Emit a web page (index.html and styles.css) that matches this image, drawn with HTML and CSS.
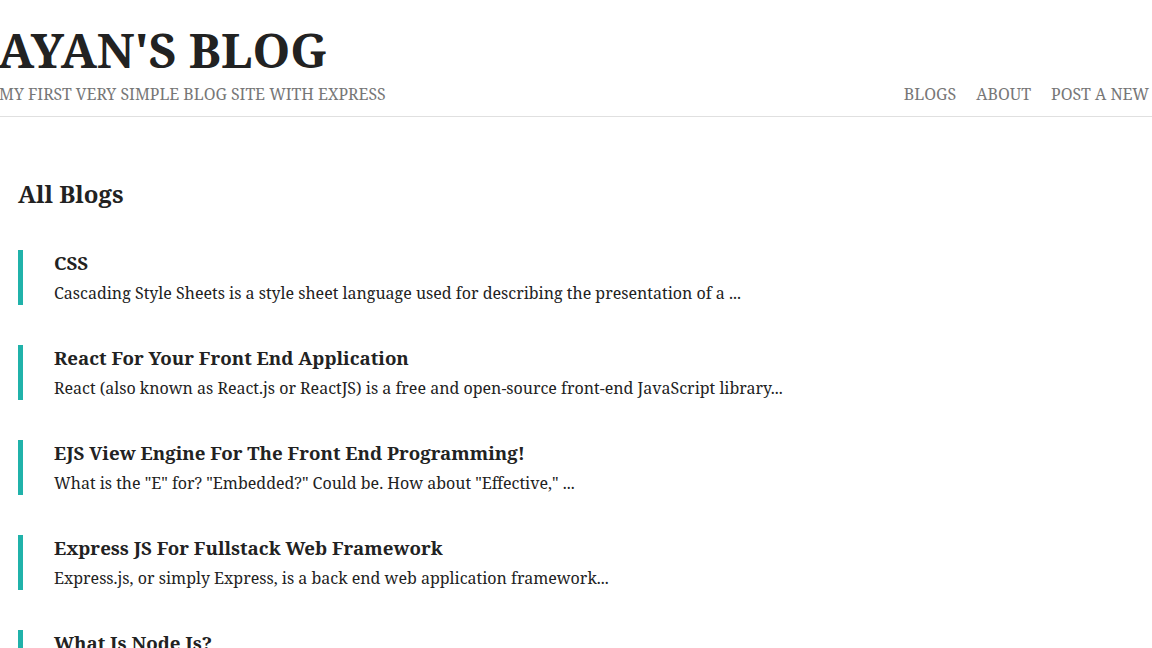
FILE: index.html
```html
<!DOCTYPE html>
<html>
<head>
<meta charset="utf-8">
<link rel="stylesheet" href="styles.css">
</head>
<body>
<header class="site-header">
  <div class="brand">
    <h1 class="site-title">AYAN'S BLOG</h1>
    <p class="tagline">MY FIRST VERY SIMPLE BLOG SITE WITH EXPRESS</p>
  </div>
  <nav class="nav">
    <a href="#">BLOGS</a>
    <a href="#">ABOUT</a>
    <a href="#">POST A NEW</a>
  </nav>
</header>
<main class="content">
  <h2 class="page-title">All Blogs</h2>
  <ul class="posts">
    <li class="post">
      <h3 class="post-title">CSS</h3>
      <p class="post-excerpt">Cascading Style Sheets is a style sheet language used for describing the presentation of a ...</p>
    </li>
    <li class="post">
      <h3 class="post-title">React For Your Front End Application</h3>
      <p class="post-excerpt">React (also known as React.js or ReactJS) is a free and open-source front-end JavaScript library...</p>
    </li>
    <li class="post">
      <h3 class="post-title">EJS View Engine For The Front End Programming!</h3>
      <p class="post-excerpt">What is the "E" for? "Embedded?" Could be. How about "Effective," ...</p>
    </li>
    <li class="post">
      <h3 class="post-title">Express JS For Fullstack Web Framework</h3>
      <p class="post-excerpt">Express.js, or simply Express, is a back end web application framework...</p>
    </li>
    <li class="post">
      <h3 class="post-title">What Is Node Js?</h3>
      <p class="post-excerpt">Node.js is an open-source, cross-platform, back-end JavaScript runtime environment...</p>
    </li>
  </ul>
</main>
</body>
</html>
```
FILE: styles.css
```css
html, body {
  margin: 0;
  padding: 0;
  background: #fff;
}
body {
  font-family: "Noto Serif", "DejaVu Serif", serif;
  color: #222;
  overflow: hidden;
}
.site-header {
  display: flex;
  justify-content: space-between;
  align-items: flex-end;
  height: 117px;
  border-bottom: 1px solid #e0e0e0;
  box-sizing: border-box;
  padding-bottom: 12px;
  padding-right: 3px;
}
.brand {
  display: flex;
  flex-direction: column;
}
.site-title {
  margin: 0;
  font-size: 48px;
  font-weight: 700;
  line-height: 48px;
  margin-left: -2px;
  color: #222;
}
.tagline {
  margin: 10px 0 0 -1px;
  font-size: 15.9px;
  line-height: 20px;
  color: #777;
}
.nav {
  display: flex;
  gap: 20px;
}
.nav a {
  font-size: 16px;
  line-height: 20px;
  color: #777;
  text-decoration: none;
}
.content {
  padding: 61px 18px 0;
}
.page-title {
  margin: 0;
  font-size: 24px;
  font-weight: 700;
  line-height: 32px;
}
.posts {
  list-style: none;
  margin: 40px 0 0;
  padding: 0;
  display: flex;
  flex-direction: column;
  gap: 40px;
}
.post {
  border-left: 5px solid #20b2aa;
  padding-left: 31px;
  height: 55px;
}
.post-title {
  margin: 0;
  font-size: 18.72px;
  font-weight: 700;
  line-height: 26px;
}
.post-excerpt {
  margin: 6px 0 0;
  font-size: 16px;
  line-height: 23px;
}
```
